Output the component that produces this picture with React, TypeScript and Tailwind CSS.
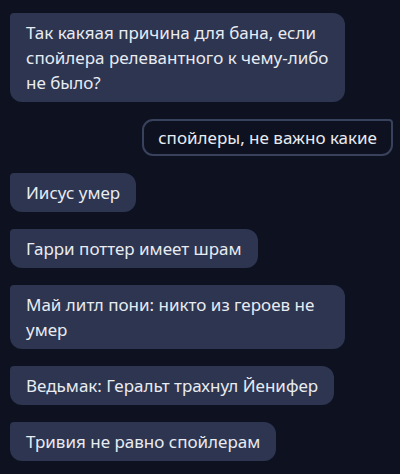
import React from "react";

type Msg = { text: string; mine?: boolean };

const messages: Msg[] = [
  { text: "Так какяая причина для бана, если спойлера релевантного к чему-либо не было?" },
  { text: "спойлеры, не важно какие", mine: true },
  { text: "Иисус умер" },
  { text: "Гарри поттер имеет шрам" },
  { text: "Май литл пони: никто из героев не умер" },
  { text: "Ведьмак: Геральт трахнул Йенифер" },
  { text: "Тривия не равно спойлерам" },
];

function Bubble({ text, mine }: Msg) {
  if (mine) {
    return (
      <div className="flex justify-end">
        <div className="rounded-[11px] rounded-tr-[4px] border-2 border-[#39425d] bg-[#0e1220] px-[14px] py-[4px] text-[17px] leading-[25px] text-[#e8ebf2]">
          {text}
        </div>
      </div>
    );
  }
  return (
    <div className="flex justify-start">
      <div className="max-w-[335px] rounded-[12px] rounded-tl-[4px] bg-[#2d3550] px-[16px] py-[7px] text-[17px] leading-[25px] text-[#e8ebf2]">
        {text}
      </div>
    </div>
  );
}

export default function App() {
  return (
    <div
      className="h-[474px] w-[400px] overflow-hidden bg-[#0e1220] pl-[10px] pr-[7px] pt-[13px]"
      style={{ fontFamily: '"Noto Sans", "Open Sans", sans-serif' }}
    >
      <div className="flex flex-col gap-[17px]">
        {messages.map((m, i) => (
          <Bubble key={i} {...m} />
        ))}
      </div>
    </div>
  );
}
